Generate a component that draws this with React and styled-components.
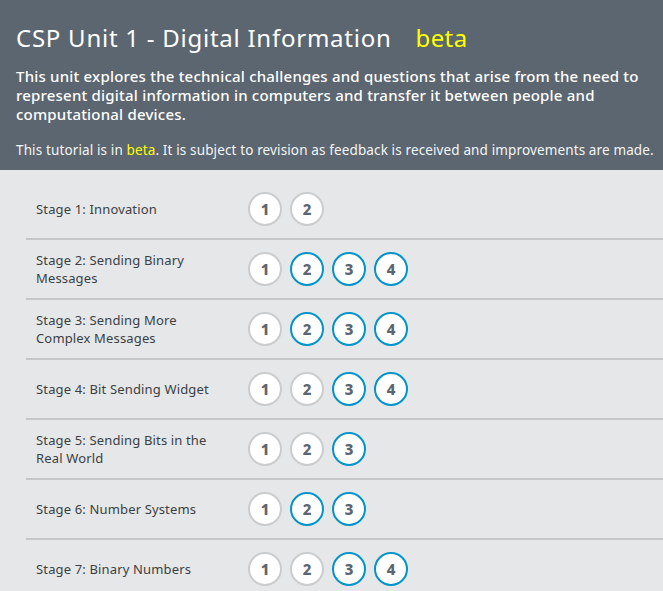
import React from 'react';
import styled, { createGlobalStyle } from 'styled-components';

const GlobalStyle = createGlobalStyle`
  html, body {
    margin: 0;
    padding: 0;
    background: #e6e7e8;
    font-family: "Noto Sans", "DejaVu Sans", sans-serif;
  }
`;

const stages = [
  { name: 'Stage 1: Innovation', levels: ['done', 'done'] },
  { name: 'Stage 2: Sending Binary Messages', levels: ['done', 'open', 'open', 'open'] },
  { name: 'Stage 3: Sending More Complex Messages', levels: ['done', 'open', 'open', 'open'] },
  { name: 'Stage 4: Bit Sending Widget', levels: ['done', 'done', 'open', 'open'] },
  { name: 'Stage 5: Sending Bits in the Real World', levels: ['done', 'done', 'open'] },
  { name: 'Stage 6: Number Systems', levels: ['done', 'open', 'open'] },
  { name: 'Stage 7: Binary Numbers', levels: ['done', 'done', 'open', 'open'] },
];

const App = () => (
  <Page>
    <GlobalStyle />
    <Header>
      <Title>
        CSP Unit 1 - Digital Information
        <Beta>beta</Beta>
      </Title>
      <Description>
        This unit explores the technical challenges and questions that arise from the need to
        represent digital information in computers and transfer it between people and
        computational devices.
      </Description>
      <Notice>
        This tutorial is in <Highlight>beta</Highlight>. It is subject to revision as feedback is
        received and improvements are made.
      </Notice>
    </Header>
    <StageList>
      {stages.map((stage) => (
        <StageRow key={stage.name}>
          <StageName>{stage.name}</StageName>
          <Bubbles>
            {stage.levels.map((state, i) => (
              <Bubble key={i} $open={state === 'open'}>
                {i + 1}
              </Bubble>
            ))}
          </Bubbles>
        </StageRow>
      ))}
    </StageList>
  </Page>
);

export default App;

const Page = styled.div`
  width: 663px;
  min-height: 591px;
  background: #e6e7e8;
  overflow: hidden;
`;

const Header = styled.header`
  background: #5b6670;
  color: #fff;
  padding: 22px 8px 12px 16px;
  height: 170px;
  box-sizing: border-box;
`;

const Title = styled.h1`
  margin: 0;
  font-size: 24px;
  font-weight: 400;
  letter-spacing: 0.75px;
  line-height: 32px;
  white-space: nowrap;
`;

const Beta = styled.span`
  color: #ffff00;
  margin-left: 24px;
  letter-spacing: 0.4px;
`;

const Description = styled.p`
  margin: 13px 0 0 0;
  font-size: 15px;
  font-weight: 500;
  letter-spacing: 0.2px;
  line-height: 19px;
  width: 640px;
`;

const Notice = styled.p`
  margin: 17px 0 0 0;
  font-size: 13.5px;
  letter-spacing: 0.13px;
  line-height: 18px;
  color: #f4f5f6;
  white-space: nowrap;
`;

const Highlight = styled.span`
  color: #ffff00;
`;

const StageList = styled.div`
  padding-top: 10px;
`;

const StageRow = styled.div`
  display: flex;
  align-items: center;
  height: 58px;
  margin-left: 26px;
  padding-left: 10px;
  border-bottom: 2px solid #c6c7c9;
`;

const StageName = styled.div`
  width: 196px;
  margin-right: 16px;
  font-size: 13px;
  letter-spacing: 0.15px;
  line-height: 18px;
  color: #3b3f44;
`;

const Bubbles = styled.div`
  display: flex;
  gap: 8px;
`;

const Bubble = styled.div`
  width: 30px;
  height: 30px;
  border-radius: 50%;
  background: #fff;
  border: 2px solid ${(p) => (p.$open ? '#0094ca' : '#cbcccd')};
  display: flex;
  align-items: center;
  justify-content: center;
  font-size: 15px;
  font-weight: 800;
  color: #5b6670;
`;
